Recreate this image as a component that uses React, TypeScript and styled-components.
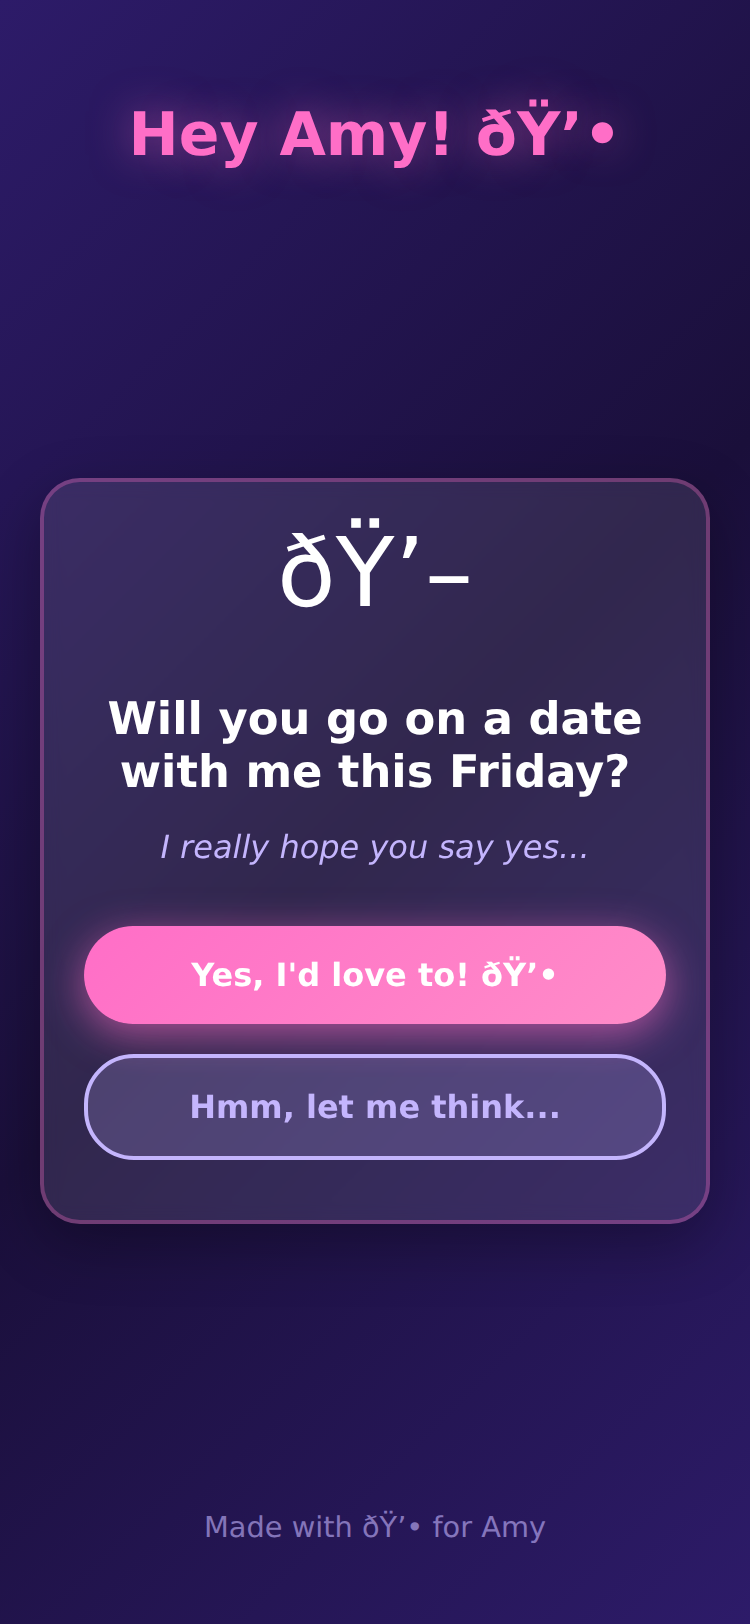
import React from "react";
import styled, { createGlobalStyle } from "styled-components";

const Global = createGlobalStyle`
  html, body { margin: 0; padding: 0; }
  body { font-family: "DejaVu Sans", sans-serif; text-rendering: geometricPrecision; }
`;

const Page = styled.main`
  box-sizing: border-box;
  width: 750px;
  height: 1624px;
  padding: 100px 40px 80px;
  display: flex;
  flex-direction: column;
  align-items: center;
  justify-content: space-between;
  background: linear-gradient(135deg, #2d1b69 0%, #1a0f3a 50%, #2d1b69 100%);
`;

const Greeting = styled.h1`
  margin: 0 0 22px;
  font-size: 60px;
  font-weight: 700;
  color: #ff6ec7;
  text-shadow: 0 0 40px rgba(255, 110, 199, 0.5);
  text-align: center;
`;

const Card = styled.section`
  box-sizing: border-box;
  width: 670px;
  padding: 60px 40px;
  display: flex;
  flex-direction: column;
  align-items: center;
  background: rgba(255, 255, 255, 0.1);
  backdrop-filter: blur(10px);
  border: 4px solid rgba(255, 110, 199, 0.3);
  border-radius: 40px;
  box-shadow: 0 20px 60px rgba(0, 0, 0, 0.3);
`;

const Mark = styled.div`
  font-size: 96px;
  color: #fff;
  margin-bottom: 38px;
  transform: translateY(-25px);
`;

const Question = styled.h2`
  margin: 0 0 30px;
  font-size: 44.8px;
  font-weight: 700;
  color: #fff;
  text-align: center;
`;

const Hint = styled.p`
  margin: 0 0 60px;
  font-size: 32px;
  font-style: italic;
  color: #c4b5fd;
  text-align: center;
`;

const Actions = styled.div`
  width: 100%;
  display: flex;
  flex-direction: column;
  gap: 30px;
`;

const YesButton = styled.button`
  height: 98px;
  border: none;
  border-radius: 50px;
  font: 700 32px "DejaVu Sans", sans-serif;
  text-rendering: geometricPrecision;
  color: #fff;
  background: linear-gradient(135deg, #ff6ec7, #ff8cc8);
  box-shadow: 0 10px 40px rgba(255, 110, 199, 0.6);
`;

const MaybeButton = styled.button`
  height: 106px;
  border: 4px solid #c4b5fd;
  border-radius: 50px;
  font: 700 32px "DejaVu Sans", sans-serif;
  text-rendering: geometricPrecision;
  color: #c4b5fd;
  background: rgba(196, 181, 253, 0.2);
`;

const Footer = styled.footer`
  font-size: 28.8px;
  color: #c4b5fd;
  opacity: 0.6;
  text-align: center;
`;

const heartPair = "\u00f0\u0178\u2019\u2022";
const sparkle = "\u00f0\u0178\u2019\u2013";

export default function App() {
  return (
    <Page>
      <Global />
      <Greeting>Hey Amy! {heartPair}</Greeting>
      <Card>
        <Mark>{sparkle}</Mark>
        <Question>Will you go on a date with me this Friday?</Question>
        <Hint>I really hope you say yes...</Hint>
        <Actions>
          <YesButton>Yes, I'd love to! {heartPair}</YesButton>
          <MaybeButton>Hmm, let me think...</MaybeButton>
        </Actions>
      </Card>
      <Footer>Made with {heartPair} for Amy</Footer>
    </Page>
  );
}
